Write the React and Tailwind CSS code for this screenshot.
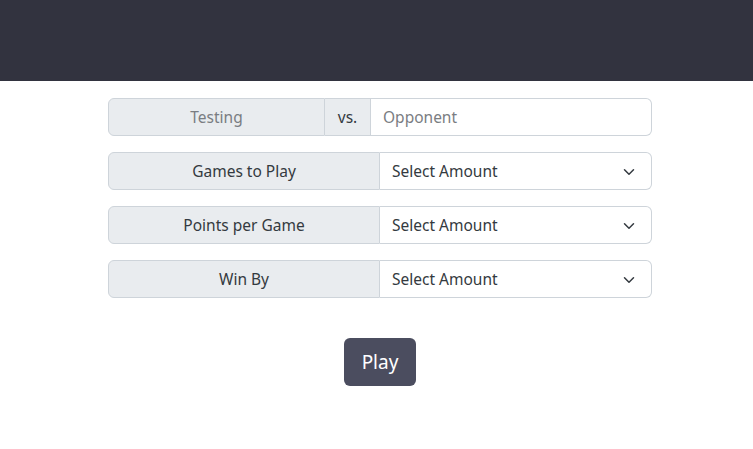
import React from 'react';

const Chevron = () => (
    <svg width="12" height="12" viewBox="0 0 16 16" fill="none" stroke="#343a40" strokeWidth="2" strokeLinecap="round" strokeLinejoin="round">
        <path d="M2 5l6 6 6-6" />
    </svg>
);

const SelectRow = ({ label }) => (
    <div className="flex h-[38px] w-full">
        <div className="w-[272px] shrink-0 flex items-center justify-center pt-[2px] bg-[#e9ecef] border border-[#ced4da] rounded-l-[6px] text-[15.5px] text-[#343a40]">
            {label}
        </div>
        <div className="flex-1 flex items-center justify-between pl-3 pr-4 pt-[2px] bg-white border border-l-0 border-[#ced4da] rounded-r-[6px] text-[15.5px] text-[#343a40]">
            <span>Select Amount</span>
            <Chevron />
        </div>
    </div>
);

export default function App() {
    return (
        <div className="min-h-[449px] bg-white" style={{ fontFamily: '"Noto Sans", "Open Sans", sans-serif' }}>
            <div className="h-[81px] bg-[#32333f]" />
            <div className="w-[544px] ml-[108px] mt-[17px] flex flex-col gap-4">
                <div className="flex h-[38px] w-full">
                    <div className="w-[217px] shrink-0 flex items-center justify-center pt-[2px] bg-[#e9ecef] border border-[#ced4da] rounded-l-[6px] text-[15.5px] text-[#7a7d82]">
                        Testing
                    </div>
                    <div className="w-[46px] shrink-0 flex items-center justify-center pt-[2px] bg-[#e9ecef] border border-l-0 border-[#ced4da] text-[15.5px] text-[#343a40]">
                        vs.
                    </div>
                    <div className="flex-1 flex items-center pl-3 pt-[2px] bg-white border border-l-0 border-[#ced4da] rounded-r-[6px] text-[15.5px] text-[#7a7d82]">
                        Opponent
                    </div>
                </div>
                <SelectRow label="Games to Play" />
                <SelectRow label="Points per Game" />
                <SelectRow label="Win By" />
            </div>
            <div className="w-[544px] ml-[108px] flex justify-center mt-10">
                <button className="w-[72px] h-[48px] rounded-[6px] bg-[#4b4d5f] text-white text-[19px]">
                    Play
                </button>
            </div>
        </div>
    );
}
